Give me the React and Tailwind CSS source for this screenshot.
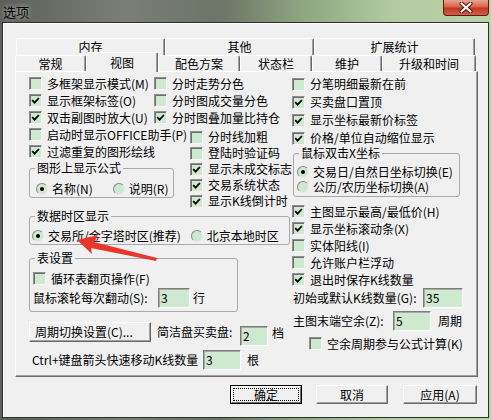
import React from 'react';

const FONT = "font-['Noto_Sans_CJK_SC','Liberation_Sans',sans-serif]";

const Box = ({ checked }) => (
  <span className="flex h-[13px] w-[13px] shrink-0 items-center justify-center border border-t-[#8f8f8f] border-l-[#8f8f8f] border-r-[#f6f6f6] border-b-[#f6f6f6] bg-[#cfe8d0] shadow-[inset_1px_1px_0_#6e6e6e]">
    {checked && (
      <svg width="9" height="9" viewBox="0 0 9 9">
        <path d="M1.2 4.2 L3.6 6.6 L7.9 2" fill="none" stroke="#000" strokeWidth="1.8" />
      </svg>
    )}
  </span>
);

const Check = ({ checked, label, h = 'h-[17px]' }) => (
  <div className={`flex items-center whitespace-nowrap ${h}`}>
    <Box checked={checked} />
    <span className="ml-[5px]">{label}</span>
  </div>
);

const Radio = ({ on, label }) => (
  <div className="flex items-center whitespace-nowrap">
    <span className="flex h-[12px] w-[12px] shrink-0 items-center justify-center rounded-full border border-t-[#8a8a8a] border-l-[#8a8a8a] border-r-[#e8e8e8] border-b-[#e8e8e8] bg-[#cfe8d0]">
      {on && <span className="h-[4px] w-[4px] rounded-full bg-black" />}
    </span>
    <span className="ml-[4px]">{label}</span>
  </div>
);

const Field = ({ value, w }) => (
  <div className={`h-[20px] shrink-0 border border-t-[#7c7c7c] border-l-[#7c7c7c] border-r-white border-b-white bg-[#cfe8d0] pl-[2px] pt-[3px] shadow-[inset_1px_1px_0_#a8a8a8] ${w}`}>
    {value}
  </div>
);

const Group = ({ title, className, children }) => (
  <fieldset className={`rounded-[3px] border border-[#a9a9a9] ${className}`}>
    <legend className="ml-[5px] px-[2px] leading-[12px]">{title}</legend>
    {children}
  </fieldset>
);

const BackTab = ({ label, w }) => (
  <div className={`flex h-full items-center justify-center rounded-t-[2px] border border-b-0 border-t-white border-l-white border-r-[#6b6b6b] shadow-[inset_-1px_0_0_#a0a0a0] ${w}`}>
    {label}
  </div>
);

const FrontTab = ({ label, w, active }) =>
  active ? (
    <div className={`relative z-10 -mb-[1px] flex h-[20px] items-center justify-center rounded-t-[2px] border border-b-0 border-t-white border-l-white border-r-[#6b6b6b] bg-[#f0f0f0] shadow-[inset_-1px_0_0_#a0a0a0] ${w}`}>
      {label}
    </div>
  ) : (
    <div className={`flex h-full items-center justify-center rounded-t-[2px] border border-b-0 border-t-white border-l-white border-r-[#6b6b6b] shadow-[inset_-1px_0_0_#a0a0a0] ${w}`}>
      {label}
    </div>
  );

const Button = ({ label, w, def }) =>
  def ? (
    <div className={`h-[19px] border border-black ${w}`}>
      <div className="h-full border border-t-white border-l-white border-r-[#6b6b6b] border-b-[#6b6b6b] p-[1px]">
        <div className="flex h-full items-center justify-center border border-dotted border-black">{label}</div>
      </div>
    </div>
  ) : (
    <div className={`flex h-[19px] items-center justify-center border border-t-white border-l-white border-r-[#6b6b6b] border-b-[#6b6b6b] shadow-[inset_-1px_-1px_0_#a0a0a0] ${w}`}>
      {label}
    </div>
  );

export default function App() {
  return (
    <div className={`relative h-[420px] w-[491px] overflow-hidden bg-[linear-gradient(90deg,#5d605a_0%,#7b7e77_25%,#6c7567_45%,#8fa782_62%,#b3cb9f_80%,#bcd2a9_100%)] text-[12px] leading-[12px] text-black ${FONT}`}>
      {/* title bar */}
      <div className="flex h-[22px] items-start justify-between">
        <span className="ml-[3px] mt-[5px] text-[13px] leading-[13px] [text-shadow:0_0_5px_rgba(255,255,255,0.7)]">选项</span>
        <div className="mr-[2px] flex h-[16px] w-[46px] items-center justify-center rounded-b-[4px] border border-t-0 border-[#5e1a10] bg-[linear-gradient(180deg,#e9a493_0%,#d4644b_45%,#c2391f_55%,#d0604a_100%)]">
          <svg width="14" height="11" viewBox="0 0 14 11">
            <path d="M2.5 1.5 L11.5 9.5 M11.5 1.5 L2.5 9.5" stroke="#4a1208" strokeWidth="4" strokeLinecap="round" />
            <path d="M2.5 1.5 L11.5 9.5 M11.5 1.5 L2.5 9.5" stroke="#fff" strokeWidth="2.2" strokeLinecap="round" />
          </svg>
        </div>
      </div>

      {/* dialog body */}
      <div className="ml-[2px] h-[396px] w-[487px] border border-[#2f2f2f] bg-[#f0f0f0] shadow-[inset_1px_1px_0_#ffffff]">
        <div className="ml-[12px] w-[463px] pt-[15px]">
          {/* tabs */}
          <div className="flex h-[17px] pl-[1px]">
            <BackTab label="内存" w="w-[149px]" />
            <BackTab label="其他" w="w-[149px]" />
            <BackTab label="扩展统计" w="w-[161px]" />
          </div>
          <div className="flex h-[16px] items-end">
            <FrontTab label="常规" w="w-[71px]" />
            <FrontTab label="视图" w="w-[72px]" active />
            <FrontTab label="配色方案" w="w-[82px]" />
            <FrontTab label="状态栏" w="w-[72px]" />
            <FrontTab label="维护" w="w-[70px]" />
            <FrontTab label="升级和时间" w="w-[94px]" />
          </div>

          {/* panel */}
          <div className="flex h-[306px] border border-t-white border-l-white border-r-[#696969] border-b-[#696969] pl-[13px] pt-[3px] shadow-[inset_-1px_-1px_0_#a0a0a0]">
            {/* left block */}
            <div className="w-[263px] shrink-0">
              <div className="flex">
                <div className="w-[125px] shrink-0">
                  <Check label="多框架显示模式(M)" />
                  <Check checked label="显示框架标签(O)" />
                  <Check checked label="双击副图时放大(U)" />
                </div>
                <div>
                  <Check label="分时走势分色" />
                  <Check label="分时图成交量分色" />
                  <Check checked label="分时图叠加量比持仓" />
                </div>
              </div>

              <div className="flex">
                <div className="w-[161px] shrink-0">
                  <Check label="启动时显示OFFICE助手(P)" />
                  <Check checked label="过滤重复的图形绘线" />
                  <Group title="图形上显示公式" className="mt-[2px] w-[145px]">
                    <div className="flex h-[14px] items-center pb-0 pl-[6px] mt-[8px] mb-[1px]">
                      <Radio on label="名称(N)" />
                      <div className="ml-[20px]">
                        <Radio label="说明(R)" />
                      </div>
                    </div>
                  </Group>
                </div>
                <div className="pt-[3px]">
                  <Check label="分时线加粗" h="h-[16px]" />
                  <Check label="登陆时验证码" h="h-[16px]" />
                  <Check checked label="显示未成交标志" h="h-[16px]" />
                  <Check checked label="交易系统状态" h="h-[16px]" />
                  <Check checked label="显示K线倒计时" h="h-[16px]" />
                </div>
              </div>

              <Group title="数据时区显示" className="mt-[1px] w-[261px]">
                <div className="mb-[1px] mt-[7px] flex h-[14px] items-center pl-[2px]">
                  <Radio on label="交易所/金字塔时区(推荐)" />
                  <div className="ml-[10px]">
                    <Radio label="北京本地时区" />
                  </div>
                </div>
              </Group>

              <Group title="表设置" className="mt-[7px] w-[209px]">
                <div className="pb-[3px] pl-[3px] pt-[6px]">
                  <Check label="循环表翻页操作(F)" />
                  <div className="mt-[1px] flex h-[20px] items-center">
                    <span className="w-[125px] shrink-0 whitespace-nowrap">鼠标滚轮每次翻动(S):</span>
                    <Field value="3" w="w-[32px]" />
                    <span className="ml-[3px]">行</span>
                  </div>
                </div>
              </Group>

              <div className="mt-[10px] flex h-[20px] items-center">
                <div className="flex h-[20px] w-[122px] shrink-0 items-center whitespace-nowrap border border-t-white border-l-white border-r-[#696969] border-b-[#696969] pl-[5px] shadow-[inset_-1px_-1px_0_#a0a0a0]">
                  周期切换设置(C)...
                </div>
                <span className="ml-[6px] w-[83px] shrink-0 whitespace-nowrap">简洁盘买卖盘:</span>
                <div className="mt-[4px] self-start">
                  <Field value="2" w="w-[28px]" />
                </div>
                <span className="ml-[4px] mt-[2px]">档</span>
              </div>

              <div className="mt-[8px] flex h-[20px] items-center pl-[3px]">
                <span className="w-[171px] shrink-0 whitespace-nowrap">Ctrl+键盘箭头快速移动K线数量</span>
                <Field value="3" w="w-[38px]" />
                <span className="ml-[6px]">根</span>
              </div>
            </div>

            {/* right column */}
            <div className="w-[170px] shrink-0">
              <Check label="分笔明细最新在前" h="h-[18px]" />
              <Check checked label="买卖盘口置顶" h="h-[18px]" />
              <Check checked label="显示坐标最新价标签" h="h-[18px]" />
              <Check checked label="价格/单位自动缩位显示" h="h-[18px]" />

              <Group title="鼠标双击X坐标" className="ml-[1px] w-[167px]">
                <div className="pb-[2px] pl-[3px] pt-[5px]">
                  <div className="flex h-[15px] items-center">
                    <Radio on label="交易日/自然日坐标切换(E)" />
                  </div>
                  <div className="flex h-[15px] items-center">
                    <Radio label="公历/农历坐标切换(A)" />
                  </div>
                </div>
              </Group>

              <div className="mt-[6px]">
                <Check checked label="主图显示最高/最低价(H)" />
                <Check checked label="显示坐标滚动条(X)" />
                <Check label="实体阳线(I)" />
                <Check label="允许账户栏浮动" />
                <Check checked label="退出时保存K线数量" />
              </div>

              <div className="flex h-[20px] items-center pl-[1px]">
                <span className="w-[130px] shrink-0 whitespace-nowrap">初始或默认K线数量(G):</span>
                <Field value="35" w="w-[40px]" />
              </div>

              <div className="mt-[3px] flex h-[20px] items-center pl-[1px]">
                <span className="w-[100px] shrink-0 whitespace-nowrap">主图末端空余(Z):</span>
                <Field value="5" w="w-[38px]" />
                <span className="ml-[7px]">周期</span>
              </div>

              <div className="mt-[4px] pl-[17px]">
                <Check label="空余周期参与公式计算(K)" />
              </div>
            </div>
          </div>

          {/* buttons */}
          <div className="mt-[8px] flex pl-[215px]">
            <Button def label="确定" w="w-[72px]" />
            <div className="ml-[14px]">
              <Button label="取消" w="w-[72px]" />
            </div>
            <div className="ml-[15px]">
              <Button label="应用(A)" w="w-[74px]" />
            </div>
          </div>
        </div>
      </div>

      {/* red annotation arrow */}
      <svg className="pointer-events-none absolute left-0 top-0" width="491" height="420" viewBox="0 0 491 420">
        <polygon
          points="77,240 98,235 94,242 157,258 156,261 91,248 92,254"
          fill="#e8362b"
        />
      </svg>
    </div>
  );
}
